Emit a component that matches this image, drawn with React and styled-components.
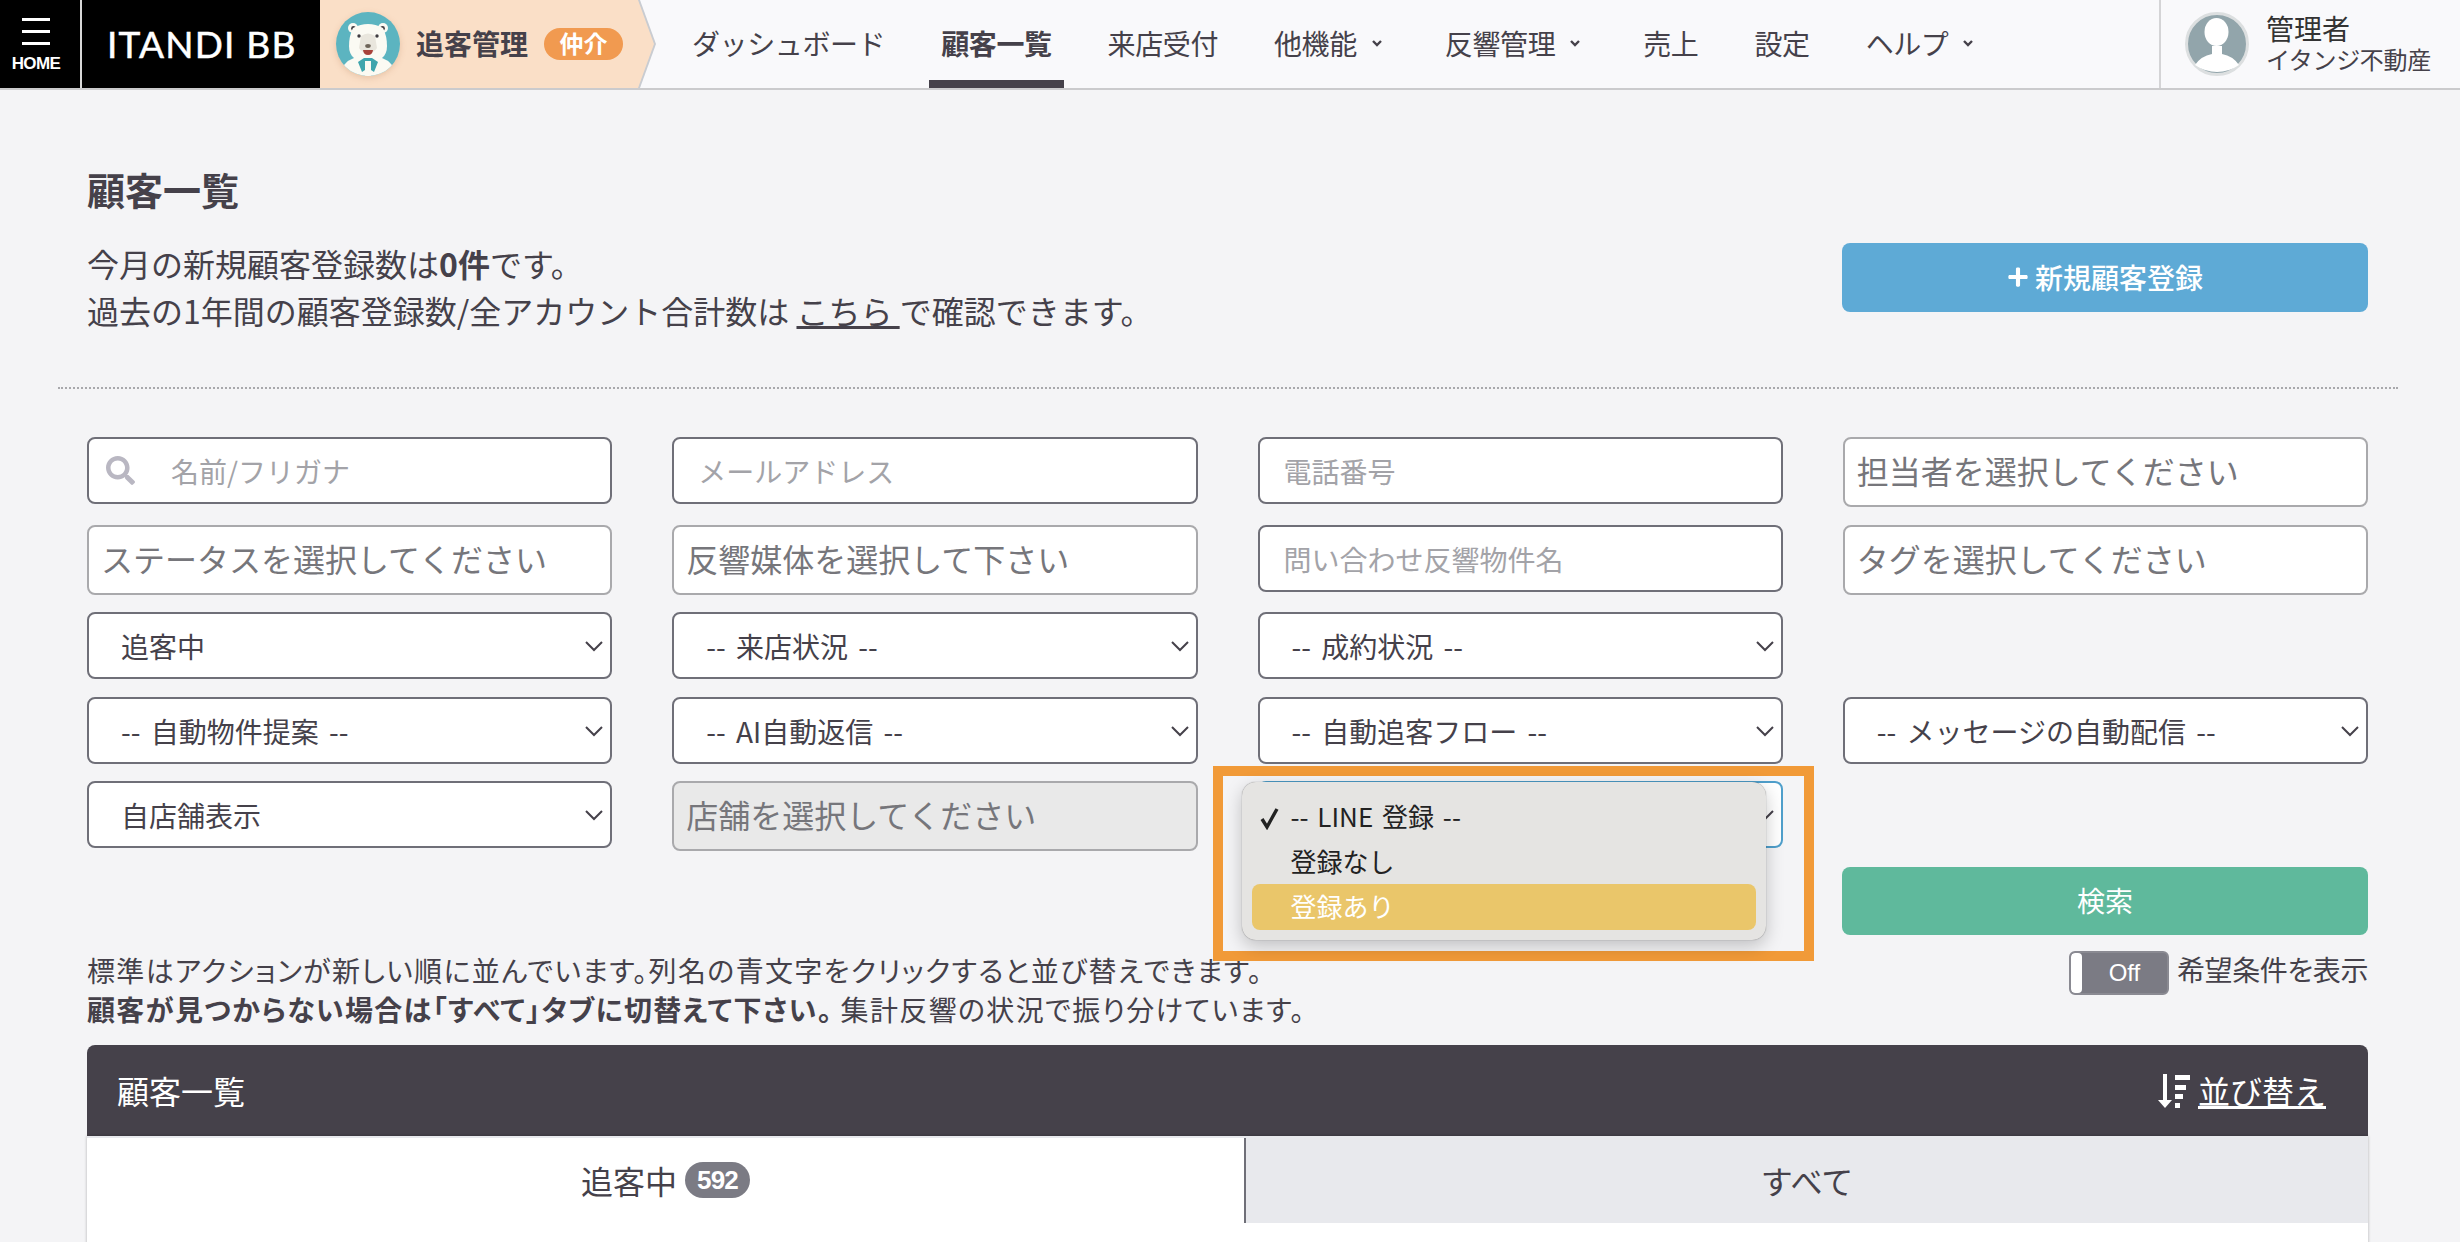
import React from "react";
import styled, { createGlobalStyle } from "styled-components";
import { FaSearch, FaPlus } from "react-icons/fa";

const JP = `"Noto Sans CJK JP", "Noto Sans", "Liberation Sans", sans-serif`;

const selectRows = [
  ["追客中", "-- 来店状況 --", "-- 成約状況 --", null],
  ["-- 自動物件提案 --", "-- AI自動返信 --", "-- 自動追客フロー --", "-- メッセージの自動配信 --"],
];

export default function App() {
  return (
    <Page>
      <GlobalStyle />
      <Header>
        <HomeLink>
          <Burger>
            <span />
            <span />
            <span />
          </Burger>
          <HomeText>HOME</HomeText>
        </HomeLink>
        <Logo>ITANDI BB</Logo>
        <Crumb>
          <BearIcon />
          <CrumbTitle>追客管理</CrumbTitle>
          <CrumbBadge>仲介</CrumbBadge>
        </Crumb>
        <Nav>
          <NavItem>ダッシュボード</NavItem>
          <NavItem $active>顧客一覧</NavItem>
          <NavItem>来店受付</NavItem>
          <NavItem>他機能<NavCaret /></NavItem>
          <NavItem>反響管理<NavCaret /></NavItem>
          <NavItem>売上</NavItem>
          <NavItem>設定</NavItem>
          <NavItem>ヘルプ<NavCaret /></NavItem>
        </Nav>
        <UserBox>
          <AvatarIcon />
          <UserText>
            <UserName>管理者</UserName>
            <UserCompany>イタンジ不動産</UserCompany>
          </UserText>
        </UserBox>
      </Header>

      <Main>
        <PageTitle>顧客一覧</PageTitle>
        <IntroRow>
          <Intro>
            今月の新規顧客登録数は<b>0件</b>です。
            <br />
            過去の1年間の顧客登録数/全アカウント合計数は <IntroLink>こちら </IntroLink>で確認できます。
          </Intro>
          <NewButton>
            <FaPlus size={22} />
            新規顧客登録
          </NewButton>
        </IntroRow>
        <DottedLine />

        <FormGrid>
          <SearchField>
            <SearchGlyph>
              <FaSearch size={29} />
            </SearchGlyph>
            <TextInput placeholder="名前/フリガナ" $left={82} />
          </SearchField>
          <TextInput placeholder="メールアドレス" />
          <TextInput placeholder="電話番号" />
          <MultiSelect>担当者を選択してください</MultiSelect>

          <MultiSelect>ステータスを選択してください</MultiSelect>
          <MultiSelect>反響媒体を選択して下さい</MultiSelect>
          <TextInput placeholder="問い合わせ反響物件名" />
          <MultiSelect>タグを選択してください</MultiSelect>

          {selectRows.flat().map((label, i) =>
            label ? <SelectBox key={i} label={label} /> : <span key={i} />
          )}

          <SelectBox label="自店舗表示" />
          <MultiSelect $disabled>店舗を選択してください</MultiSelect>
          <LineCell>
            <SelectBox label="-- LINE 登録 --" $focused />
            <Highlight />
            <Menu>
              <MenuItem>
                <MenuCheck viewBox="0 0 20 24">
                  <path d="M2 13l5 8L17 3" />
                </MenuCheck>
                -- LINE 登録 --
              </MenuItem>
              <MenuItem>登録なし</MenuItem>
              <MenuItem $hover>登録あり</MenuItem>
            </Menu>
          </LineCell>
        </FormGrid>

        <SearchRow>
          <SearchButton>検索</SearchButton>
        </SearchRow>

        <InfoRow>
          <InfoText>
            標準はアクションが新しい順に並んでいます。列名の青文字をクリックすると並び替えできます。
            <br />
            <b>顧客が見つからない場合は「すべて」タブに切替えて下さい。</b> 集計反響の状況で振り分けています。
          </InfoText>
          <ToggleWrap>
            <Toggle>
              <ToggleHandle />
              <ToggleText>Off</ToggleText>
            </Toggle>
            <ToggleLabel>希望条件を表示</ToggleLabel>
          </ToggleWrap>
        </InfoRow>

        <ListHead>
          <ListTitle>顧客一覧</ListTitle>
          <SortLink>
            <SortIcon />
            <SortText>並び替え</SortText>
          </SortLink>
        </ListHead>
        <TabPanel>
          <Tabs>
            <Tab $active>
              追客中<TabCount>592</TabCount>
            </Tab>
            <Tab>すべて</Tab>
          </Tabs>
        </TabPanel>
      </Main>
    </Page>
  );
}

function SelectBox({ label, $focused }) {
  return (
    <SelectWrap>
      <NativeSelect $focused={$focused} defaultValue={label}>
        <option>{label}</option>
      </NativeSelect>
      <SelectCaret viewBox="0 0 18 11">
        <path d="M1 1l8 8 8-8" />
      </SelectCaret>
    </SelectWrap>
  );
}

function NavCaret() {
  return (
    <Caret viewBox="0 0 10 7">
      <path d="M1 1l4 4 4-4" />
    </Caret>
  );
}

function BearIcon() {
  return (
    <BearSvg viewBox="0 0 64 64">
      <rect width="64" height="64" fill="#5cb4c0" />
      <circle cx="17" cy="16" r="5" fill="#fbfaf3" />
      <circle cx="47" cy="16" r="5" fill="#fbfaf3" />
      <circle cx="17.5" cy="16.5" r="2.4" fill="#3f3b40" />
      <circle cx="46.5" cy="16.5" r="2.4" fill="#3f3b40" />
      <path d="M17 16q15-8 30 0 4 8 4 18 0 8-5 12-6 4-14 4t-14-4q-5-4-5-12 0-10 4-18z" fill="#fbfaf3" />
      <path d="M4 64q2-14 14-18l14-2 14 2q12 4 14 18z" fill="#fbfaf3" />
      <path d="M25 24q7-5 14 0l2 12q-3 5-9 5t-9-5z" fill="#e9e6dd" />
      <circle cx="23" cy="24" r="1.7" fill="#3f3b40" />
      <circle cx="41" cy="24" r="1.7" fill="#3f3b40" />
      <ellipse cx="32" cy="34" rx="2.8" ry="1.9" fill="#6d6458" />
      <path d="M27 38h10q-.5 5-5 5t-5-5z" fill="#a8423a" />
      <path d="M22 50l6-4h8l6 4-4 10-3-2v-9h-6v9l-3 2z" fill="#3fa5ad" />
      <rect x="29" y="49" width="6" height="15" fill="#fbfaf3" />
    </BearSvg>
  );
}

function AvatarIcon() {
  return (
    <AvatarSvg viewBox="0 0 64 64">
      <circle cx="32" cy="32" r="30.5" fill="#92a5ab" stroke="#dcdfe0" strokeWidth="3" />
      <ellipse cx="31.5" cy="20" rx="12" ry="14" fill="#fff" />
      <path d="M10 53q6-9 17-11v-8h10v8q11 2 17 11-10 7-22 7t-22-7z" fill="#fff" />
    </AvatarSvg>
  );
}

function SortIcon() {
  return (
    <SortSvg viewBox="0 0 32 34" fill="#fff">
      <rect x="5" y="0" width="4" height="27" />
      <path d="M0 26h14l-7 8z" />
      <rect x="17" y="1" width="15" height="5" />
      <rect x="17" y="11" width="11" height="5" />
      <rect x="17" y="20" width="8" height="5" />
      <rect x="17" y="29" width="5" height="5" />
    </SortSvg>
  );
}

const GlobalStyle = createGlobalStyle`
  html, body {
    margin: 0;
    padding: 0;
    background: #f4f4f6;
  }
  * {
    box-sizing: border-box;
  }
`;

const Page = styled.div`
  width: 2460px;
  height: 1242px;
  overflow: hidden;
  background: #f4f4f6;
  color: #45414a;
  font-family: ${JP};
  font-size: 28px;
`;

// Header
const Header = styled.header`
  display: flex;
  height: 90px;
  background: #f9f9fb;
  border-bottom: 2px solid #cbcbcd;
`;
const HomeLink = styled.div`
  width: 82px;
  flex: none;
  background: #000;
  border-right: 2px solid #d8d8d8;
  display: flex;
  flex-direction: column;
  align-items: center;
  padding: 18px 8px 0 0;
`;
const Burger = styled.div`
  width: 28px;
  display: flex;
  flex-direction: column;
  gap: 9px;
  span {
    height: 3px;
    background: #fff;
  }
`;
const HomeText = styled.div`
  margin-top: 10px;
  color: #fff;
  font-family: "Liberation Sans", sans-serif;
  font-weight: 700;
  font-size: 17px;
  line-height: 18px;
  letter-spacing: -0.6px;
`;
const Logo = styled.div`
  width: 238px;
  flex: none;
  background: #000;
  color: #fff;
  font-family: Lato, sans-serif;
  font-size: 37px;
  letter-spacing: 1.2px;
  line-height: 88px;
  padding-left: 25px;
  white-space: nowrap;
  -webkit-text-stroke: 0.5px #fff;
`;
const Crumb = styled.div`
  position: relative;
  width: 336px;
  height: 88px;
  flex: none;
  display: flex;
  align-items: center;
  padding-left: 16px;
  background: #c9ccd1;
  clip-path: polygon(0 0, 320px 0, 336px 44px, 320px 88px, 0 88px);
  &::before {
    content: "";
    position: absolute;
    inset: 0;
    background: #fadfc7;
    clip-path: polygon(0 0, 318px 0, 334px 44px, 318px 88px, 0 88px);
  }
  > * {
    position: relative;
  }
`;
const BearSvg = styled.svg`
  width: 64px;
  height: 64px;
  flex: none;
  border-radius: 50%;
  box-shadow: 0 2px 6px rgba(190, 130, 90, 0.3);
`;
const CrumbTitle = styled.div`
  margin-left: 16px;
  font-weight: 700;
  font-size: 28px;
  padding-bottom: 2px;
`;
const CrumbBadge = styled.div`
  margin-left: 16px;
  width: 79px;
  height: 32px;
  border-radius: 16px;
  background: #f19a50;
  color: #fff;
  font-weight: 700;
  font-size: 24px;
  line-height: 30px;
  text-align: center;
`;
const Nav = styled.nav`
  display: flex;
  gap: 32px;
  margin-left: 24px;
  flex: 1;
`;
const NavItem = styled.div`
  height: 88px;
  padding: 5px 12px 0;
  display: flex;
  align-items: center;
  white-space: nowrap;
  font-size: 28px;
  letter-spacing: -0.4px;
  font-weight: ${(p) => (p.$active ? 700 : 400)};
  border-bottom: 8px solid ${(p) => (p.$active ? "#45414a" : "transparent")};
`;
const Caret = styled.svg`
  width: 10px;
  height: 7px;
  margin: 2px 7px 0 15px;
  fill: none;
  stroke: #45414a;
  stroke-width: 2.4;
`;
const UserBox = styled.div`
  width: 301px;
  flex: none;
  display: flex;
  align-items: center;
  padding: 0 0 4px 24px;
  border-left: 2px solid #d4d4d6;
`;
const AvatarSvg = styled.svg`
  width: 64px;
  height: 64px;
  flex: none;
  margin-top: 4px;
`;
const UserText = styled.div`
  margin-left: 17px;
  white-space: nowrap;
`;
const UserName = styled.div`
  font-size: 28px;
  line-height: 34px;
  color: #333;
`;
const UserCompany = styled.div`
  font-size: 24px;
  line-height: 28px;
  letter-spacing: -0.3px;
`;

// Top of the page
const Main = styled.main`
  padding: 75px 92px 0 87px;
`;
const PageTitle = styled.h1`
  margin: 0;
  font-size: 38px;
  font-weight: 700;
  line-height: 48px;
`;
const IntroRow = styled.div`
  display: flex;
  justify-content: space-between;
  align-items: flex-start;
  margin-top: 27px;
`;
const Intro = styled.div`
  font-size: 32px;
  line-height: 47px;
`;
const IntroLink = styled.span`
  text-decoration: underline;
`;
const NewButton = styled.div`
  margin-top: 3px;
  width: 526px;
  height: 69px;
  padding-bottom: 2px;
  border-radius: 8px;
  background: #5eaad6;
  color: #fff;
  font-size: 28px;
  font-weight: 500;
  display: flex;
  align-items: center;
  justify-content: center;
  gap: 6px;
`;
const DottedLine = styled.div`
  margin: 53px -30px 0 -29px;
  border-top: 2px dotted #a8a8ac;
`;

// Search form
const FormGrid = styled.div`
  margin-top: 48px;
  display: grid;
  grid-template-columns: repeat(4, 1fr);
  grid-template-rows: 71px 70px 68px 67px 68px;
  column-gap: 60px;
  row-gap: 17px;
  align-items: start;
`;
const TextInput = styled.input`
  display: block;
  width: 100%;
  height: 67px;
  border: 2px solid #6f6f78;
  border-radius: 8px;
  background: #fff;
  padding: 0 0 0 ${(p) => p.$left || 24}px;
  font-family: ${JP};
  font-size: 28px;
  outline: none;
  &::placeholder {
    color: #a3a3a8;
    opacity: 1;
  }
`;
const SearchField = styled.div`
  position: relative;
`;
const SearchGlyph = styled.div`
  position: absolute;
  left: 19px;
  top: 19px;
  line-height: 0;
  color: #b9b7c2;
`;
const MultiSelect = styled.div`
  height: 70px;
  border: 2px solid #a9a9ac;
  border-radius: 8px;
  background: ${(p) => (p.$disabled ? "#e9e9e9" : "#fff")};
  padding-left: 12px;
  font-size: 32px;
  line-height: 62px;
  color: #76767b;
  white-space: nowrap;
`;
const SelectWrap = styled.div`
  position: relative;
`;
const NativeSelect = styled.select`
  display: block;
  width: 100%;
  height: 67px;
  appearance: none;
  border: 2px solid ${(p) => (p.$focused ? "#4f9fcb" : "#6f6f78")};
  border-radius: 8px;
  background: #fff;
  padding: 0 40px 0 32px;
  font-family: ${JP};
  font-size: 28px;
  word-spacing: 4px;
  color: #45414a;
  outline: none;
`;
const SelectCaret = styled.svg`
  position: absolute;
  right: 9px;
  top: 29px;
  width: 18px;
  height: 11px;
  fill: none;
  stroke: #45414a;
  stroke-width: 2;
  pointer-events: none;
`;

// Open LINE dropdown and the orange marker round it
const LineCell = styled.div`
  position: relative;
`;
const Highlight = styled.div`
  position: absolute;
  left: -45px;
  top: -15px;
  width: 601px;
  height: 195px;
  border: 10px solid #f19a38;
`;
const Menu = styled.div`
  position: absolute;
  left: -16px;
  top: 1px;
  width: 524px;
  height: 158px;
  padding: 12px 10px 10px;
  border-radius: 14px;
  background: #e5e4e2;
  box-shadow: 0 0 1px rgba(0, 0, 0, 0.5), 0 6px 18px rgba(0, 0, 0, 0.22);
`;
const MenuItem = styled.div`
  position: relative;
  height: ${(p) => (p.$hover ? 46 : 45)}px;
  padding-left: 39px;
  border-radius: 8px;
  font-size: 26px;
  line-height: 44px;
  word-spacing: 3px;
  white-space: nowrap;
  color: ${(p) => (p.$hover ? "#fff" : "#222")};
  background: ${(p) => (p.$hover ? "#eac66a" : "transparent")};
`;
const MenuCheck = styled.svg`
  position: absolute;
  left: 8px;
  top: 12px;
  width: 20px;
  height: 24px;
  fill: none;
  stroke: #222;
  stroke-width: 3.4;
`;

const SearchRow = styled.div`
  display: flex;
  justify-content: flex-end;
  margin-top: 18px;
`;
const SearchButton = styled.div`
  width: 526px;
  height: 68px;
  border-radius: 8px;
  background: #5fb99c;
  color: #fff;
  font-size: 28px;
  line-height: 66px;
  text-align: center;
`;
const InfoRow = styled.div`
  display: flex;
  justify-content: space-between;
  align-items: flex-start;
  margin-top: 16px;
`;
const InfoText = styled.div`
  font-size: 28px;
  line-height: 39px;
  letter-spacing: 1.35px;
  white-space: nowrap;
  font-feature-settings: "palt";
`;
const ToggleWrap = styled.div`
  display: flex;
  gap: 8px;
`;
const Toggle = styled.div`
  width: 100px;
  height: 44px;
  border: 2px solid #8a8a92;
  border-radius: 6px;
  background: #7b7b84;
  display: flex;
  overflow: hidden;
`;
const ToggleHandle = styled.div`
  width: 11px;
  background: #fff;
  border-radius: 4px;
`;
const ToggleText = styled.div`
  flex: 1;
  text-align: center;
  color: #fff;
  font-family: "Liberation Sans", sans-serif;
  font-size: 24px;
  line-height: 40px;
`;
const ToggleLabel = styled.div`
  font-size: 28px;
  line-height: 36px;
  letter-spacing: -0.4px;
  font-feature-settings: "palt";
`;

// Customer list
const ListHead = styled.div`
  margin-top: 16px;
  height: 91px;
  display: flex;
  align-items: center;
  justify-content: space-between;
  padding: 0 42px 2px 30px;
  border-radius: 8px 8px 0 0;
  background: #45414a;
  color: #fff;
`;
const ListTitle = styled.div`
  font-size: 32px;
`;
const SortLink = styled.div`
  display: flex;
  align-items: center;
  gap: 8px;
`;
const SortSvg = styled.svg`
  width: 32px;
  height: 34px;
  margin-top: 2px;
`;
const SortText = styled.div`
  font-size: 32px;
  text-decoration: underline;
`;
const TabPanel = styled.div`
  height: 200px;
  padding-top: 2px;
  background: #fff;
  border-top: 2px solid #e8e9ed;
  box-shadow: 0 0 3px rgba(0, 0, 0, 0.28);
`;
const Tabs = styled.div`
  display: grid;
  grid-template-columns: 1157px 1fr;
  margin-top: -2px;
`;
const Tab = styled.div`
  height: 85px;
  padding-bottom: 2px;
  display: flex;
  align-items: center;
  justify-content: center;
  gap: 8px;
  font-size: 32px;
  background: ${(p) => (p.$active ? "#fff" : "#e8e9ed")};
  border-left: ${(p) => (p.$active ? "none" : "2px solid #6f6f78")};
`;
const TabCount = styled.span`
  height: 36px;
  padding: 0 12px;
  border-radius: 18px;
  background: #7b7b84;
  color: #fff;
  font-family: "Liberation Sans", sans-serif;
  font-weight: 700;
  font-size: 26px;
  line-height: 36px;
  letter-spacing: -0.8px;
`;
